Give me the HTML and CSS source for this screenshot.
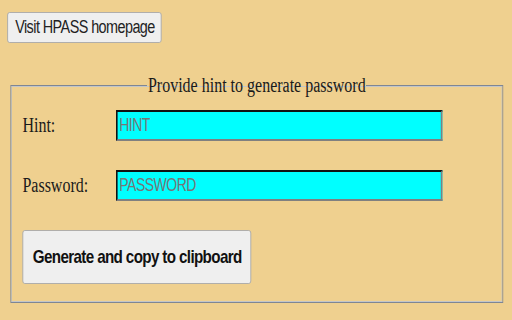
FILE: index.html
```html
<!DOCTYPE html>
<html>
<head>
<meta charset="utf-8">
<link rel="stylesheet" href="styles.css">
</head>
<body>
<div class="page">
  <button class="visit">Visit HPASS homepage</button>
  <fieldset class="box">
    <legend class="title">Provide hint to generate password</legend>
    <div class="form">
      <label class="lbl" for="hint">Hint:</label>
      <input class="field" id="hint" type="text" placeholder="HINT">
      <label class="lbl" for="pw">Password:</label>
      <input class="field" id="pw" type="text" placeholder="PASSWORD">
    </div>
    <button class="gen">Generate and copy to clipboard</button>
  </fieldset>
</div>
</body>
</html>
```

FILE: styles.css
```css
html, body {
  margin: 0;
  padding: 0;
  background: #efd08f;
  overflow: hidden;
}
.page {
  width: 640px;
  height: 320px;
  box-sizing: border-box;
  padding: 12px 9px 0 9px;
  transform: scaleX(0.8);
  transform-origin: 0 0;
}
.visit {
  display: block;
  height: 31px;
  padding: 0 8px 0 9px;
  font: 18px "Liberation Sans", Arial, sans-serif;
  letter-spacing: -0.7px;
  color: #222;
  background: #efefef;
  border: 1px solid #a8a8a8;
  border-radius: 3px;
}
.box {
  margin: 31px 2px 0 4px;
  padding: 13px 14px 18px 14px;
  border: 1px solid #7e8694;
  box-shadow: inset 0 0 0 1px #c4c6c8;
}
.title {
  margin: 0 auto;
  padding: 0 1px;
  font: 20px "Liberation Serif", "Times New Roman", serif;
  color: #1a1a1a;
}
.form {
  display: grid;
  grid-template-columns: 117px 408px;
  row-gap: 29px;
  align-items: center;
}
.lbl {
  font: 20px "Liberation Serif", "Times New Roman", serif;
  color: #1a1a1a;
}
.field {
  box-sizing: border-box;
  width: 408px;
  height: 31px;
  margin: 0;
  padding: 0 2px;
  background: #00ffff;
  border: 2px solid;
  border-color: #111 #808080 #808080 #111;
  font: 17.5px "Liberation Sans", Arial, sans-serif;
  letter-spacing: -0.6px;
  color: #222;
  outline: none;
}
.field::placeholder {
  color: #767676;
}
.gen {
  display: block;
  margin-top: 29px;
  height: 54px;
  padding: 0 11px 0 12px;
  font: bold 19px "Liberation Sans", Arial, sans-serif;
  letter-spacing: -0.8px;
  color: #111;
  background: #efefef;
  border: 1px solid #a8a8a8;
  border-radius: 3px;
}
```
